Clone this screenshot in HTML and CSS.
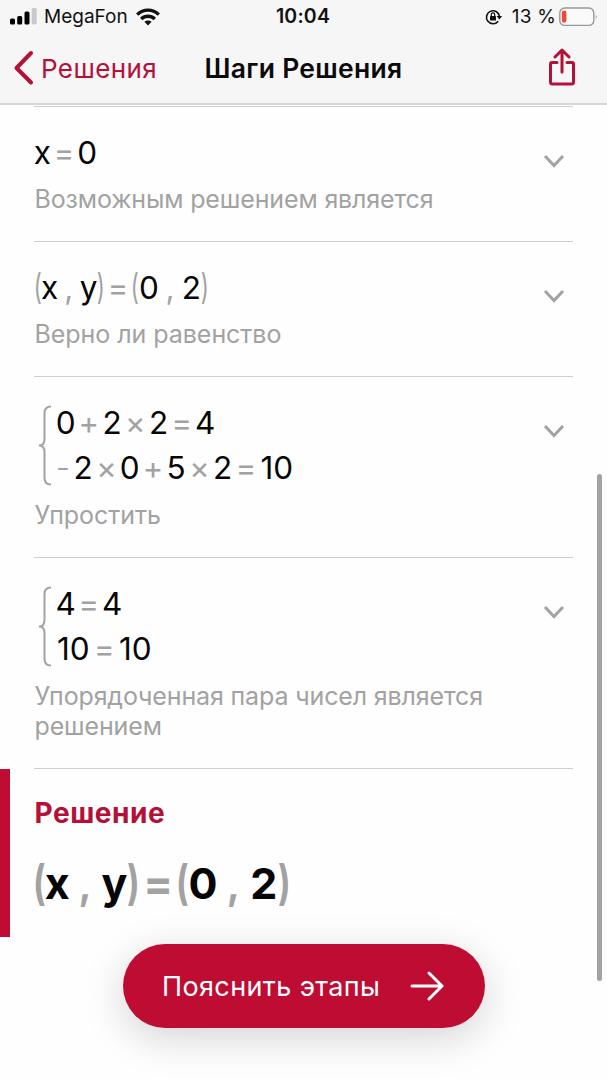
FILE: index.html
```html
<!DOCTYPE html>
<html lang="ru">
<head>
<meta charset="utf-8">
<title>Шаги Решения</title>
<link rel="stylesheet" href="styles.css">
</head>
<body>
<div class="screen">
  <header class="header">
    <div class="status">
      <div class="status-left">
        <svg class="signal" width="27" height="17" viewBox="0 0 27 17"><rect x="0" y="10.5" width="5" height="6" rx="1.5"/><rect x="7.2" y="8" width="5" height="8.5" rx="1.5"/><rect x="14.5" y="3.5" width="5" height="13" rx="1.5"/><rect x="21.7" y="0" width="5" height="16.5" rx="1.5" fill="#c9c9c9"/></svg>
        <span class="carrier">MegaFon</span>
        <svg class="wifi" width="24" height="18" viewBox="0 0 24 18" fill="none" stroke="#111" stroke-width="3.4"><path d="M1.2 6.6C7.4 .6 16.6 .6 22.8 6.6"/><path d="M5.2 11C9 7.4 15 7.4 18.8 11"/><path d="M12 17.5 8.4 13.8Q12 11 15.6 13.8Z" fill="#111" stroke="none"/></svg>
      </div>
      <span class="time">10:04</span>
      <div class="status-right">
        <svg width="18" height="16" viewBox="0 0 18 16" fill="none" stroke="#111" stroke-width="1.6"><path d="M13.2 12.2A6.5 6.5 0 1 1 14.4 7.2"/><path d="M11.6 7h5.6l-2.8 3.6z" fill="#111" stroke="none"/><rect x="5" y="7" width="6" height="4.6" rx=".7" fill="#111" stroke="none"/><path d="M6.3 7.2V5.6a1.7 1.7 0 0 1 3.4 0v1.6" stroke-width="1.2"/></svg>
        <span class="percent">13 %</span>
        <svg class="battery" width="39" height="20" viewBox="0 0 39 20"><rect x=".8" y="1" width="34" height="17.4" rx="5" fill="#fafafa" stroke="#999" stroke-width="1.4"/><rect x="2.8" y="3.6" width="4.6" height="12" rx="2.2" fill="#eb4b3d"/><path d="M36.8 7.2q1.8 2.4 0 5z" fill="#999"/></svg>
      </div>
    </div>
    <nav class="nav">
      <div class="back">
        <svg width="22" height="36" viewBox="0 0 22 36" fill="none" stroke="#b41038" stroke-width="4" stroke-linecap="round" stroke-linejoin="round"><path d="M18 3 3.500 18 18 32.5"/></svg>
        <span class="back-text">Решения</span>
      </div>
      <h1 class="title">Шаги Решения</h1>
      <svg class="share" width="28" height="40" viewBox="0 0 28 40" fill="none" stroke="#b41038" stroke-width="3" stroke-linecap="round" stroke-linejoin="round"><path d="M9 14.500H4Q2.500 14.500 2.500 16V34Q2.500 36 4.500 36H23.500Q25.500 36 25.500 34V16Q25.500 14.500 24 14.500H19"/><path d="M14 24V2M7 9l7-7 7 7"/></svg>
    </nav>
  </header>

  <main class="steps">
    <section class="step">
      <div class="body">
        <div class="eq"><span class="x">x</span><span class="op">=</span><span class="num">0</span></div>
        <p class="label">Возможным решением является</p>
      </div>
      <svg class="chevron" viewBox="0 0 22 14"><path d="M2 2l9 9.500 9-9.500"/></svg>
    </section>
    <section class="step">
      <div class="body">
        <div class="eq"><span class="par">(</span><span class="x2">x</span><span class="comma">,</span><span class="y">y</span><span class="par">)</span><span class="op">=</span><span class="par">(</span><span class="num">0</span><span class="comma">,</span><span class="num">2</span><span class="par">)</span></div>
        <p class="label short">Верно ли равенство</p>
      </div>
      <svg class="chevron" viewBox="0 0 22 14"><path d="M2 2l9 9.500 9-9.500"/></svg>
    </section>
    <section class="step">
      <div class="body">
        <div class="system">
          <svg class="brace" viewBox="0 0 14 82"><path d="M13 1.500Q6.500 1.500 6.500 8V34Q6.500 40.500 1 40.500Q6.500 40.500 6.500 47V73Q6.500 79.500 13 79.500"/></svg>
          <div>
            <div class="eq"><span class="num">0</span><span class="op">+</span><span class="num">2</span><span class="op">×</span><span class="num">2</span><span class="op">=</span><span class="num">4</span></div>
            <div class="eq"><span class="neg">-</span><span class="num">2</span><span class="op">×</span><span class="num">0</span><span class="op">+</span><span class="num">5</span><span class="op">×</span><span class="num">2</span><span class="op">=</span><span class="ten">10</span></div>
          </div>
        </div>
        <p class="label short">Упростить</p>
      </div>
      <svg class="chevron" viewBox="0 0 22 14"><path d="M2 2l9 9.500 9-9.500"/></svg>
    </section>
    <section class="step">
      <div class="body">
        <div class="system">
          <svg class="brace" viewBox="0 0 14 82"><path d="M13 1.500Q6.500 1.500 6.500 8V34Q6.500 40.500 1 40.500Q6.500 40.500 6.500 47V73Q6.500 79.500 13 79.500"/></svg>
          <div>
            <div class="eq"><span class="num">4</span><span class="op">=</span><span class="num">4</span></div>
            <div class="eq"><span class="ten">10</span><span class="op">=</span><span class="ten">10</span></div>
          </div>
        </div>
        <p class="label">Упорядоченная пара чисел является<br>решением</p>
      </div>
      <svg class="chevron" viewBox="0 0 22 14"><path d="M2 2l9 9.500 9-9.500"/></svg>
    </section>
  </main>

  <section class="solution">
    <h2 class="solution-title">Решение</h2>
    <div class="eq big"><span class="par">(</span><span class="x2">x</span><span class="comma">,</span><span class="y">y</span><span class="par">)</span><span class="op">=</span><span class="par">(</span><span class="num">0</span><span class="comma">,</span><span class="num">2</span><span class="par">)</span></div>
  </section>

  <button class="explain">
    <span class="explain-text">Пояснить этапы</span>
    <svg width="34" height="30" viewBox="0 0 34 30" fill="none" stroke="#fff" stroke-width="3" stroke-linecap="round" stroke-linejoin="round"><path d="M2 15H32M19 2 32 15 19 28"/></svg>
  </button>
  <div class="scrollbar"></div>
</div>
</body>
</html>
```
FILE: styles.css
```css
* { box-sizing: border-box; }
body { margin: 0; font-family: Inter, "Liberation Sans", sans-serif; background: #fefefe; }
h1, h2, p { margin: 0; }
svg { display: block; flex: none; }
.screen { position: relative; width: 607px; height: 1080px; overflow: hidden; }

.header { height: 105px; background: #f6f6f6; border-bottom: 2px solid #d6d6d6; }
.status { height: 33px; display: grid; grid-template-columns: 1fr auto 1fr; align-items: center; padding: 0 9px 0 10px; color: #111; font-size: 19px; line-height: 33px; white-space: nowrap; }
.status-left { display: flex; align-items: center; }
.signal { margin-right: 7px; }
.wifi { margin-left: 8px; }
.time { font-weight: 600; font-size: 19.500px; letter-spacing: .2px; margin-right: 2px; }
.status-right { display: flex; align-items: center; justify-content: flex-end; }
.percent { margin-left: 9px; letter-spacing: .2px; }
.battery { margin: 0 0 0 3px; }
.nav { height: 70px; display: grid; grid-template-columns: 187px 207px 183px; align-items: center; padding: 0 17px 0 13px; color: #b41038; }
.back { display: flex; align-items: center; gap: 6px; font-size: 26px; }
.back-text { letter-spacing: .4px; }
.title { color: #0b0b0b; font-size: 26.500px; font-weight: 600; letter-spacing: .3px; text-align: center; white-space: nowrap; }
.share { justify-self: end; margin-right: 14px; }

.steps { padding: 0 34px; margin-top: 1px; }
.step { display: flex; justify-content: space-between; border-top: 1px solid #cecece; padding: 23px 0 26.500px; }
.step:last-child { border-bottom: 1px solid #cecece; padding-bottom: 25.600px; }
.eq { display: flex; height: 45.300px; line-height: 45.300px; font-size: 31.500px; color: #060606; }
.eq span { display: flex; justify-content: center; flex: none; }
.eq .x { width: 16.700px; }
.eq .x2 { width: 15.800px; }
.eq .y { width: 17.200px; }
.eq .num { width: 19.900px; }
.eq .ten { width: 35.300px; }
.eq .op { width: 26.600px; color: #a2a2a2; font-size: 31px; font-weight: 400; }
.eq .neg { width: 17.600px; padding-right: 3px; color: #a2a2a2; font-weight: 300; }
.eq .comma { width: 22.600px; color: #a2a2a2; }
.eq .par { width: 7.600px; color: #a2a2a2; transform: translateY(-1px) scale(.7, 1.12); }
.label { margin-top: 8.500px; padding-left: .5px; font-size: 25px; line-height: 30.700px; letter-spacing: -.14px; color: #a2a2a2; white-space: nowrap; }
.label.short { letter-spacing: -.05px; }
.system { display: flex; padding-bottom: .7px; }
.brace { width: 14px; height: 82px; margin: 5px 3.700px 0 4px; fill: none; stroke: #a2a2a2; stroke-width: 2; }
.chevron { width: 22px; height: 14px; margin: 24px 8px 0 0; fill: none; stroke: #a2a2a2; stroke-width: 3; }

.solution { border-left: 10px solid #bf0c33; height: 168px; padding: 28px 0 0 24.500px; }
.solution-title { font-size: 28px; line-height: 33px; font-weight: 700; letter-spacing: .55px; color: #b41038; }
.eq.big { font-size: 43px; font-weight: 700; height: 60px; line-height: 60px; margin: 23px 0 0 -.500px; }
.big .par { width: 10.700px; font-weight: 700; transform: translateY(-1px) scale(.78, 1.1); }
.big .x2 { width: 25px; }
.big .comma { width: 31px; font-weight: 600; }
.big .y { width: 27.500px; }
.big .op { width: 38.600px; font-size: 44px; font-weight: 700; }
.big .num { width: 29.700px; }

.explain { position: absolute; left: 123px; top: 944px; width: 362px; height: 84px; border: 0; border-radius: 42px; background: #bf0c33; color: #fff; font: 400 27px Inter, "Liberation Sans", sans-serif; letter-spacing: .38px; display: flex; align-items: center; justify-content: space-between; padding: 0 41px 0 39px; box-shadow: 0 10px 40px rgba(0, 0, 0, .17); }
.scrollbar { position: absolute; left: 597px; top: 474px; width: 5px; height: 507px; border-radius: 3px; background: #a2a2a2; }
```
